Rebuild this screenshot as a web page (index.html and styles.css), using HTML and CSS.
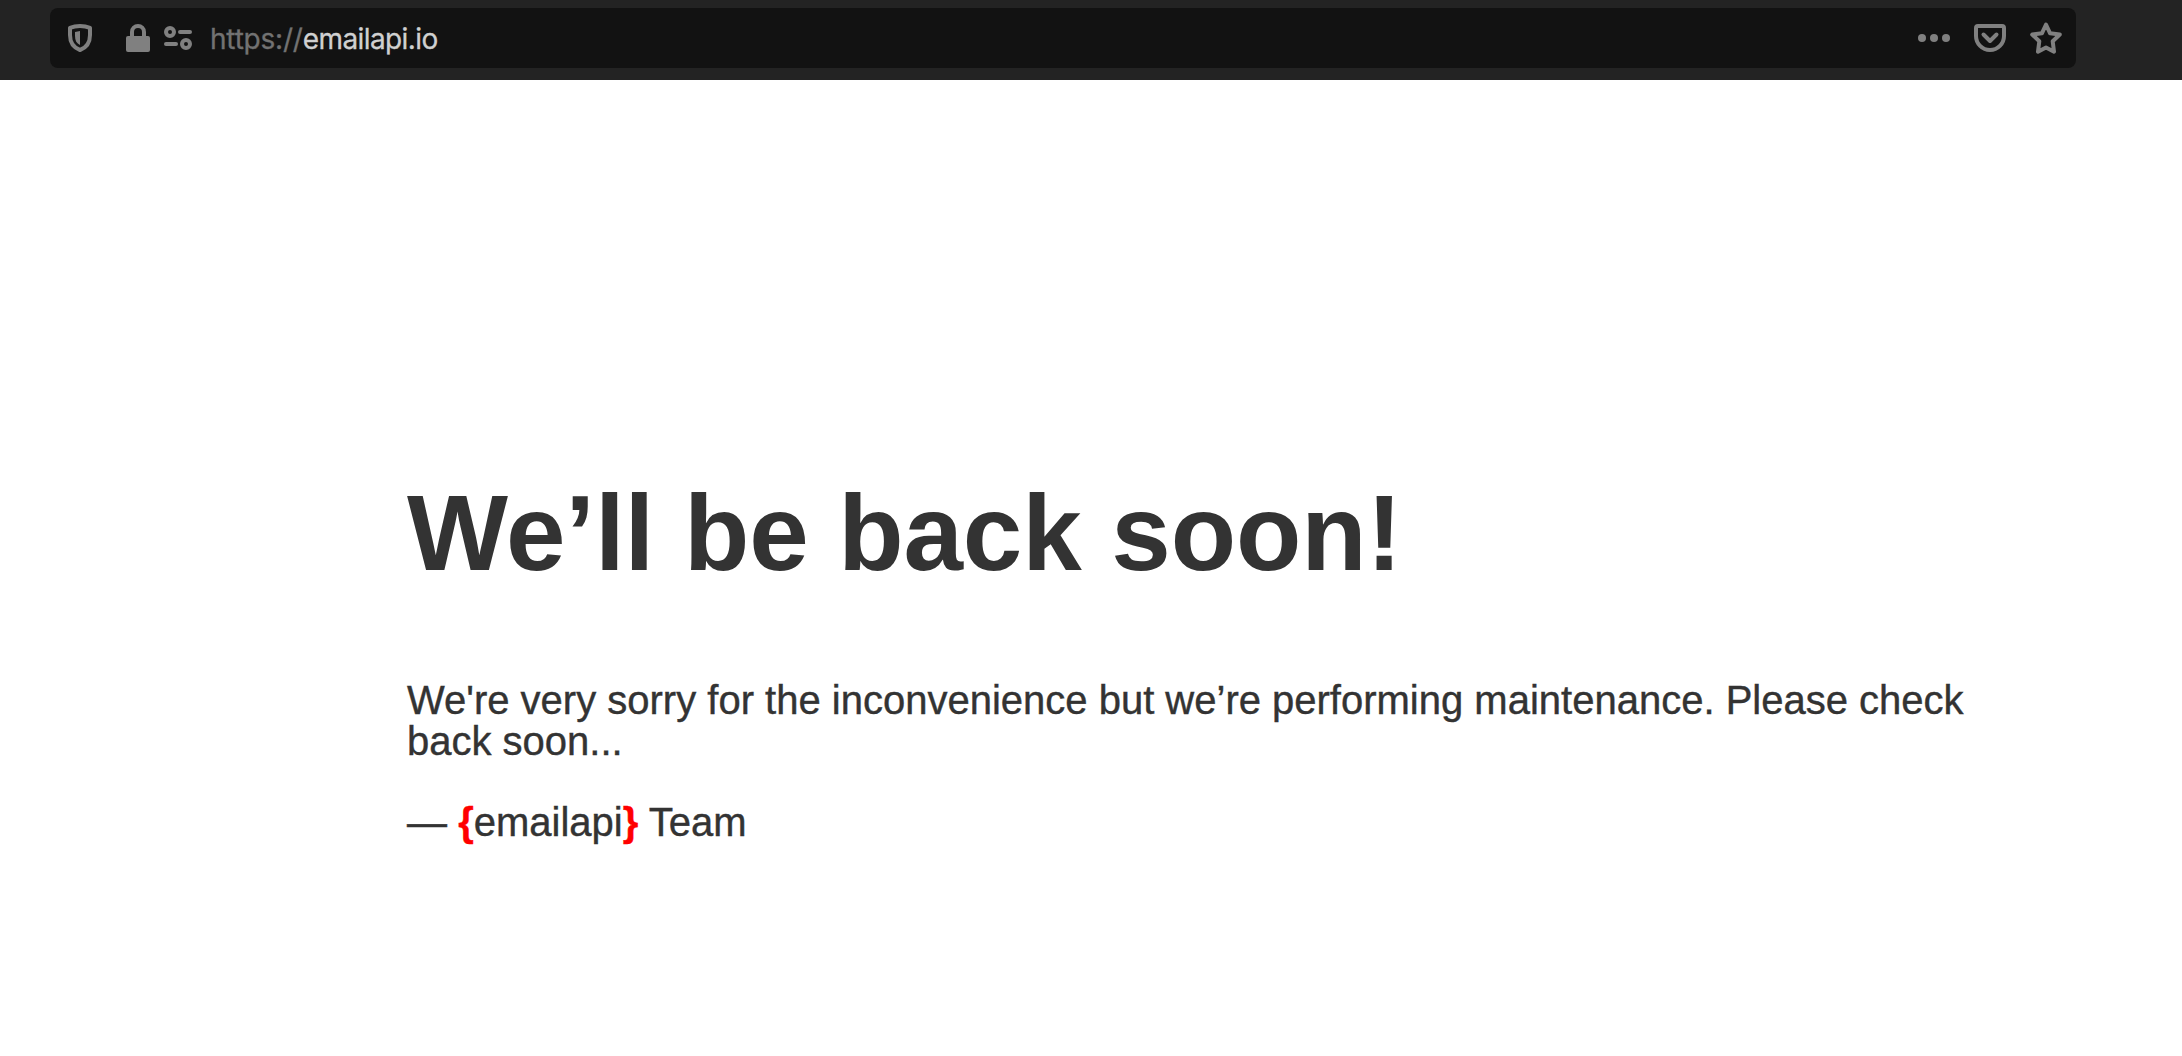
FILE: index.html
```html
<!DOCTYPE html>
<html lang="en">
<head>
    <meta charset="UTF-8">
    <meta name="viewport" content="width=device-width, initial-scale=1.0">
    <title>Site Maintenance</title>
    <link rel="stylesheet" href="styles.css">
</head>
<body>

<header class="toolbar">
    <div class="urlbar">
        <svg class="icon" width="24" height="28" viewBox="0 0 24 28">
            <path class="line" d="M12 2C8.500 2 5 2.600 2 3.800V11c0 7.500 4 12.800 10 15 6-2.200 10-7.500 10-15V3.800C19 2.600 15.500 2 12 2z"/>
            <path class="fill" d="M7 8l5-1v14c-3.400-1.500-5-4.500-5-9z"/>
        </svg>
        <svg class="icon lock" width="24" height="28" viewBox="0 0 24 28">
            <path class="line" d="M6 14V8a6 6 0 0 1 12 0v6"/>
            <rect class="fill" y="12" width="24" height="16" rx="2"/>
        </svg>
        <svg class="icon permissions" width="28" height="24" viewBox="0 0 28 24">
            <circle class="line" cx="6" cy="6" r="4"/>
            <path class="line" d="M16 6h10M2 18h10"/>
            <circle class="line" cx="22" cy="18" r="4"/>
        </svg>
        <div class="url"><span class="scheme">https://</span><span class="domain">emailapi.io</span></div>
        <div class="actions">
            <svg class="icon" width="32" height="32" viewBox="0 0 32 32">
                <circle class="fill" cx="4" cy="16" r="4"/>
                <circle class="fill" cx="16" cy="16" r="4"/>
                <circle class="fill" cx="28" cy="16" r="4"/>
            </svg>
            <svg class="icon" width="32" height="32" viewBox="0 0 32 32">
                <path class="line" d="M4 4h24a2 2 0 0 1 2 2v8a14 14 0 0 1-28 0V6a2 2 0 0 1 2-2z"/>
                <path class="line" d="M9.500 12.500l6.500 6.500 6.500-6.500"/>
            </svg>
            <svg class="icon" width="32" height="32" viewBox="0 0 32 32">
                <path class="line" d="M16 2.500l4.100 8.800 9.700 1.200-7.100 6.700 1.300 10.500L16 25.500l-8 4.200 1.300-10.500-7.100-6.700 9.700-1.200z"/>
            </svg>
        </div>
    </div>
</header>

<article class="message">
    <h1>We&rsquo;ll be back soon!</h1>
    <p>We're very sorry for the inconvenience but we&rsquo;re performing maintenance. Please check back soon...</p>
    <p>&mdash; <b>{</b>emailapi<b>}</b> Team</p>
</article>

</body>
</html>
```
FILE: styles.css
```css
body {
    margin: 0;
    background-color: #fff;
    color: #333;
    font: 40px/41px "Liberation Sans", Helvetica, Arial, sans-serif;
}

/* Browser toolbar */
.toolbar {
    box-sizing: border-box;
    height: 80px;
    padding: 8px 106px 12px 50px;
    background-color: #232323;
}

.urlbar {
    box-sizing: border-box;
    display: flex;
    align-items: center;
    height: 60px;
    padding: 0 14px 0 18px;
    border-radius: 8px;
    background-color: #121212;
}

.icon {
    display: block;
    flex: none;
}

.line {
    fill: none;
    stroke: #808080;
    stroke-width: 4;
    stroke-linecap: round;
    stroke-linejoin: round;
}

.fill {
    fill: #808080;
}

.lock {
    margin-left: 34px;
}

.permissions {
    margin-left: 14px;
}

.url {
    margin-left: 18px;
    padding-top: 2px;
    font-family: Inter, sans-serif;
    font-size: 28px;
    line-height: 34px;
    white-space: nowrap;
    -webkit-text-stroke: 0.3px;
}

.scheme {
    color: #727272;
    letter-spacing: -0.2px;
}

.domain {
    color: #d0d0d0;
    letter-spacing: -0.6px;
}

.actions {
    display: flex;
    gap: 24px;
    margin-left: auto;
}

/* Maintenance message */
.message {
    width: 1600px;
    padding: 400px 0 0 407px;
}

h1 {
    margin: 0 0 93px;
    font-size: 107px;
    line-height: 107px;
    letter-spacing: -0.1px;
}

p {
    margin: 0 0 40px;
    -webkit-text-stroke: 0.4px;
}

b {
    color: #f00;
}
```
